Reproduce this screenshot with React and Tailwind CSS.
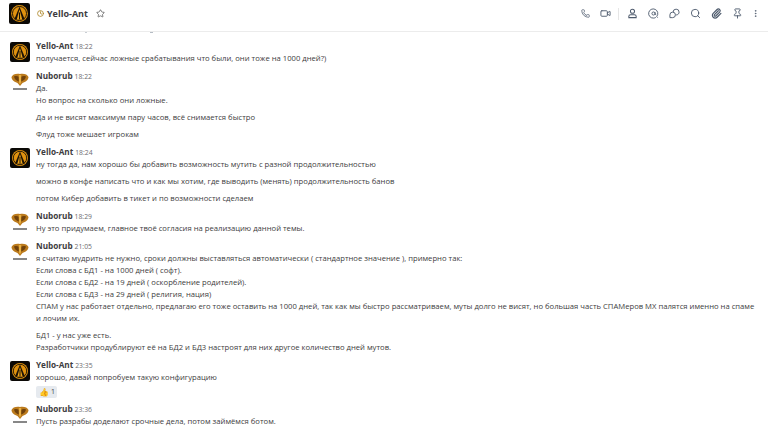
import React from 'react';
import { Phone, Video, Search, Paperclip, Pin, MoreVertical, Star, Clock } from 'lucide-react';

const YelloLogo = ({ className = 'w-5 h-5' }) => (
  <svg viewBox="0 0 20 20" className={`${className} shrink-0`}>
    <rect width="20" height="20" rx="2" fill="#0b0906" />
    <circle cx="10" cy="10" r="8" fill="#e0920f" />
    <circle cx="10" cy="10" r="6.7" fill="none" stroke="#1c1206" strokeWidth="0.9" />
    <path d="M10 3.6 L15 15.6 L5 15.6 Z" fill="#1c1206" />
    <path d="M10 6 L12.6 15.6 L7.4 15.6 Z" fill="#eda51c" />
    <rect x="9.5" y="9" width="1" height="6.6" fill="#1c1206" />
  </svg>
);

const NuborubLogo = () => (
  <svg viewBox="0 0 20 20" className="w-5 h-5 shrink-0">
    <path d="M1.5 5 C2.5 2.5 6 1.2 10 2 C14 1.2 17.5 2.5 18.5 5 C18.5 8 15.5 10 12.5 11 L10 14 L7.5 11 C4.5 10 1.5 8 1.5 5 Z" fill="#bb7a1c" />
    <path d="M4 4.6 C5.5 3.8 7.5 4 8.8 4.8 L8.8 9.6 C6.5 9 4.4 7 4 4.6 Z M16 4.6 C14.5 3.8 12.5 4 11.2 4.8 L11.2 9.6 C13.5 9 15.6 7 16 4.6 Z" fill="#70420c" />
    <path d="M8.8 3 L11.2 3 L11 10 L10 12.4 L9 10 Z" fill="#e9b143" />
    <rect x="3" y="16.2" width="14" height="1.6" fill="#6a6a6a" />
  </svg>
);

const messages = [
  { who: 'y', time: '18:22', paras: [['получается, сейчас ложные срабатывания что были, они тоже на 1000 дней?)']] },
  { who: 'n', time: '18:22', paras: [['Да.', 'Но вопрос на сколько они ложные.'], ['Да и не висят максимум пару часов, всё снимается быстро'], ['Флуд тоже мешает игрокам']] },
  { who: 'y', time: '18:24', paras: [['ну тогда да, нам хорошо бы добавить возможность мутить с разной продолжительностью'], ['можно в конфе написать что и как мы хотим, где выводить (менять) продолжительность банов'], ['потом Кибер добавить в тикет и по возможности сделаем']] },
  { who: 'n', time: '18:29', paras: [['Ну это придумаем, главное твоё согласия на реализацию данной темы.']] },
  { who: 'n', time: '21:05', paras: [[
    'я считаю мудрить не нужно, сроки должны выставляться автоматически ( стандартное значение ), примерно так:',
    'Если слова с БД1 - на 1000 дней ( софт).',
    'Если слова с БД2 - на 19 дней ( оскорбление родителей).',
    'Если слова с БД3 - на 29 дней ( религия, нация)',
    'СПАМ у нас работает отдельно, предлагаю его тоже оставить на 1000 дней, так как мы быстро рассматриваем, муты долго не висят, но большая часть СПАМеров МХ палятся именно на спаме',
    'и лочим их.',
  ], ['БД1 - у нас уже есть.', 'Разработчики продублируют её на БД2 и БД3 настроят для них другое количество дней мутов.']] },
  { who: 'y', time: '23:35', paras: [['хорошо, давай попробуем такую конфигурацию']], reaction: true },
  { who: 'n', time: '23:36', paras: [['Пусть разрабы доделают срочные дела, потом займёмся ботом.']] },
];

const Message = ({ who, time, paras, reaction }) => (
  <div className="flex gap-[6px] pl-[10px] pt-[3px] pb-[2.25px]">
    <div className="pt-[2px]">{who === 'y' ? <YelloLogo /> : <NuborubLogo />}</div>
    <div className="flex flex-col gap-[5px]">
      <div>
        <div className="flex items-baseline gap-[2px] h-[13px] leading-[12px]">
          <span className="font-bold text-[8.2px] text-[#3d3c40]">{who === 'y' ? 'Yello-Ant' : 'Nuborub'}</span>
          <span className="text-[6.8px] text-[#6d6c70]">{time}</span>
        </div>
        {paras[0].map((line) => (
          <div key={line} className="whitespace-nowrap">{line}</div>
        ))}
      </div>
      {paras.slice(1).map((p, i) => (
        <div key={i}>
          {p.map((line) => (
            <div key={line} className="whitespace-nowrap">{line}</div>
          ))}
        </div>
      ))}
      {reaction && (
        <div className="flex items-center gap-[2px] w-[21px] h-[12px] -mt-[3px] rounded-[2px] bg-[#e6eaef] px-[3px] text-[7px]">
          <span className="text-[8px] leading-none">👍</span>
          <span>1</span>
        </div>
      )}
    </div>
  </div>
);

const MentionIcon = () => (
  <svg viewBox="0 0 24 24" className="w-[11px] h-[11px]" fill="none" stroke="currentColor" strokeWidth="2">
    <path d="M21 21 L19 18.5 A10 10 0 1 0 12 22 A10 10 0 0 0 17 20.6" />
    <circle cx="12" cy="12" r="3.4" />
    <path d="M15.4 9 V13.5 C15.4 15 17.4 15 17.4 13" />
  </svg>
);

const BubblesIcon = () => (
  <svg viewBox="0 0 24 24" className="w-[11px] h-[11px]" fill="none" stroke="currentColor" strokeWidth="2">
    <path d="M9 9 A6.5 6.5 0 0 1 22 9 C22 12 20 14.5 17 15 L15 15" />
    <path d="M2 15 A6 6 0 0 1 14 15 A6 6 0 0 1 8 21 L2 21 Z" />
  </svg>
);

const UserIcon = () => (
  <svg viewBox="0 0 24 24" className="w-[11px] h-[11px]" fill="none" stroke="currentColor" strokeWidth="2.2">
    <circle cx="12" cy="7" r="4.5" />
    <path d="M4 21 V18 C4 15.5 6 14.5 8 14.5 H16 C18 14.5 20 15.5 20 18 V21 Z" />
  </svg>
);

export default function App() {
  return (
    <div className="w-[768px] h-[432px] overflow-hidden bg-white flex flex-col font-['Open_Sans','Noto_Sans',sans-serif] text-[7.66px] leading-[11.9px] text-[#3d3c40]">
      <header className="h-[32px] shrink-0 flex items-center border-b border-[#ececec] pl-[9px] pr-[8px] pb-[4px]">
        <YelloLogo className="w-[21px] h-[21px]" />
        <Clock size={7} strokeWidth={3} className="ml-[7px] text-[#b08a30]" />
        <span className="ml-[3px] text-[9px] font-bold">Yello-Ant</span>
        <Star size={9} className="ml-[8px] text-[#555]" />
        <div className="ml-auto flex items-center text-[#4d5a6c]">
          <Phone size={9} className="mr-[10px]" />
          <Video size={11} className="mr-[7px]" />
          <div className="w-px h-[12px] bg-[#e6e6e6] mr-[8px]" />
          <div className="mr-[10px]"><UserIcon /></div>
          <div className="mr-[10px]"><MentionIcon /></div>
          <div className="mr-[10px]"><BubblesIcon /></div>
          <Search size={11} className="mr-[10px]" />
          <Paperclip size={11} strokeWidth={2.6} className="mr-[10px]" />
          <Pin size={11} className="mr-[8px]" />
          <MoreVertical size={9} />
        </div>
      </header>
      <main className="flex-1 overflow-hidden">
        <div className="flex h-[1px]">
          <div className="ml-[85px] w-[2px] bg-[#c9ced4]" />
          <div className="ml-[63px] w-[3px] bg-[#b5bcc4]" />
        </div>
        <div className="pt-[4px]">
          {messages.map((m, i) => (
            <Message key={i} {...m} />
          ))}
        </div>
      </main>
    </div>
  );
}
